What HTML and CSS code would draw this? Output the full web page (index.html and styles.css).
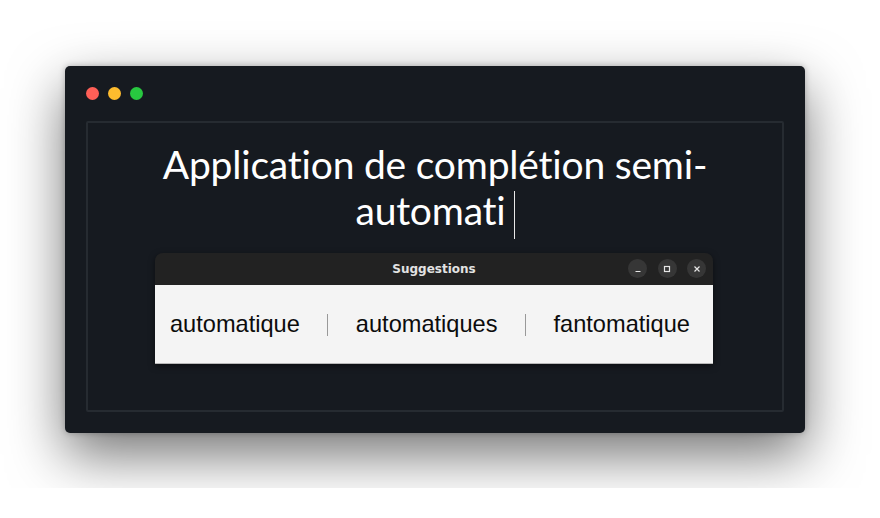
FILE: index.html
```html
<!DOCTYPE html>
<html lang="fr">
<head>
<meta charset="utf-8">
<link rel="stylesheet" href="styles.css">
</head>
<body>
<div class="stage">
  <div class="window">
    <div class="lights">
      <span class="dot red"></span>
      <span class="dot yellow"></span>
      <span class="dot green"></span>
    </div>
    <div class="panel">
      <div class="title">Application de complétion semi-<br>automati<span class="caret"></span></div>
      <div class="popup">
        <div class="bar">
          <span class="bar-title">Suggestions</span>
          <div class="btns">
            <span class="btn"><svg width="10" height="10" viewBox="0 0 10 10"><path d="M2.5 7.5h5" stroke="#e6e6e6" stroke-width="1.2"/></svg></span>
            <span class="btn"><svg width="10" height="10" viewBox="0 0 10 10"><rect x="2.5" y="2.5" width="5" height="5" fill="none" stroke="#e6e6e6" stroke-width="1.2"/></svg></span>
            <span class="btn"><svg width="10" height="10" viewBox="0 0 10 10"><path d="M2.5 2.5l5 5M7.5 2.5l-5 5" stroke="#e6e6e6" stroke-width="1.2"/></svg></span>
          </div>
        </div>
        <div class="words">
          <span class="word">automatique</span>
          <span class="sep"></span>
          <span class="word">automatiques</span>
          <span class="sep"></span>
          <span class="word">fantomatique</span>
        </div>
      </div>
    </div>
  </div>
</div>
</body>
</html>
```
FILE: styles.css
```css
html, body { margin: 0; padding: 0; background: #ffffff; }
.stage {
  width: 880px;
  height: 488px;
  overflow: hidden;
  padding: 66px 0 0 65px;
  box-sizing: border-box;
}
.window {
  width: 740px;
  height: 367px;
  background: #161a20;
  border-radius: 5px;
  box-shadow: 0 22px 55px rgba(0,0,0,0.55), 0 0 6px rgba(0,0,0,0.25);
  padding: 21px 21px 21px 21px;
  box-sizing: border-box;
  display: flex;
  flex-direction: column;
}
.lights { display: flex; gap: 9px; height: 13px; }
.dot { width: 13px; height: 13px; border-radius: 50%; display: block; }
.red { background: #fe5f57; }
.yellow { background: #febc2e; }
.green { background: #28c840; }
.panel {
  margin-top: 21px;
  flex: 1;
  border: 2px solid #262b31;
  border-radius: 2px;
  display: flex;
  flex-direction: column;
  align-items: center;
  padding-top: 18px;
}
.title {
  font-family: Lato, sans-serif;
  font-size: 39px;
  line-height: 46px;
  color: #ffffff;
  text-align: center;
  letter-spacing: -0.2px;
}
.caret {
  display: inline-block;
  width: 1px;
  height: 48px;
  background: #e8e8e8;
  vertical-align: -14px;
  margin-left: 8px;
}
.popup {
  margin-top: 14px;
  margin-right: 2px;
  width: 558px;
  border-radius: 8px 8px 0 0;
  box-shadow: 0 2px 6px rgba(0,0,0,0.5);
  overflow: hidden;
}
.bar {
  height: 32px;
  background: #222222;
  position: relative;
  display: flex;
  align-items: center;
  justify-content: center;
}
.bar-title {
  font-family: "DejaVu Sans", sans-serif;
  font-weight: bold;
  font-size: 12px;
  color: #e2e2e2;
}
.btns {
  position: absolute;
  right: 7px;
  top: 6px;
  display: flex;
  gap: 10.5px;
}
.btn {
  width: 19px;
  height: 19px;
  border-radius: 50%;
  background: #363636;
  display: flex;
  align-items: center;
  justify-content: center;
}
.words {
  height: 78px;
  background: #f4f4f4;
  border-bottom: 1px solid #b8b8b8;
  display: flex;
  align-items: center;
  gap: 27.5px;
  padding-left: 15px;
  font-family: "Liberation Sans", Arial, sans-serif;
  font-size: 23.6px;
  color: #0c0c0c;
}
.sep {
  width: 1px;
  height: 22px;
  background: #999999;
  margin-top: 2px;
}
```
